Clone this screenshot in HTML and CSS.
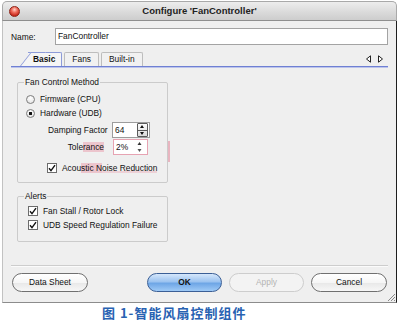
FILE: index.html
```html
<!DOCTYPE html>
<html>
<head>
    <title>Configure 'FanController'</title>
    <link rel="stylesheet" href="styles.css">
</head>
<body>
    <div class="window">
        <div class="titlebar">
            <span class="close"></span>
            <span class="title">Configure 'FanController'</span>
            <span></span>
        </div>
        <div class="body">
            <div class="name-row">
                <label>Name:</label>
                <div class="text-input">FanController</div>
            </div>

            <div class="tabs">
                <div class="tab active">Basic</div>
                <div class="tab">Fans</div>
                <div class="tab">Built-in</div>
                <svg class="tab-arrows" width="19" height="8" viewBox="0 0 19 8">
                    <path d="M1.5 4 L5.5 0.8 L5.5 7.2 Z" fill="#fff" stroke="#222" stroke-width="1"/>
                    <path d="M17.5 4 L13.5 0.8 L13.5 7.2 Z" fill="#fff" stroke="#222" stroke-width="1"/>
                </svg>
            </div>

            <div class="panel">
                <fieldset class="group method">
                    <legend>Fan Control Method</legend>
                    <div class="rows">
                        <div class="row">
                            <span class="radio"></span>
                            <span>Firmware (CPU)</span>
                        </div>
                        <div class="row">
                            <span class="radio checked"></span>
                            <span>Hardware (UDB)</span>
                        </div>
                        <div class="row field damping">
                            <span class="field-label">Damping Factor</span>
                            <div class="spin-input">
                                <span class="value">64</span>
                                <span class="spin">
                                    <span class="spin-up"></span>
                                    <span class="spin-down"></span>
                                </span>
                            </div>
                        </div>
                        <div class="row field tolerance">
                            <span class="field-label">Tole<span class="mark">rance</span></span>
                            <div class="spin-input small">
                                <span class="value">2%</span>
                                <svg class="mini-spin" width="5" height="12" viewBox="0 0 5 12">
                                    <path d="M0.5 4 L2.5 1 L4.5 4 Z" fill="#333"/>
                                    <path d="M0.5 8 L2.5 11 L4.5 8 Z" fill="#555"/>
                                </svg>
                            </div>
                        </div>
                        <div class="row check-row acoustic">
                            <span class="checkbox">
                                <svg width="8" height="8" viewBox="0 0 8 8"><path d="M1 4.2 L3 6.6 L7 1.2" fill="none" stroke="#111" stroke-width="1.4"/></svg>
                            </span>
                            <span>Acou<span class="mark">stic N</span><span class="mark-line">oise Reduction</span></span>
                        </div>
                    </div>
                </fieldset>

                <fieldset class="group alerts">
                    <legend>Alerts</legend>
                    <div class="rows">
                        <div class="row check-row">
                            <span class="checkbox">
                                <svg width="8" height="8" viewBox="0 0 8 8"><path d="M1 4.2 L3 6.6 L7 1.2" fill="none" stroke="#111" stroke-width="1.4"/></svg>
                            </span>
                            <span>Fan Stall / Rotor Lock</span>
                        </div>
                        <div class="row check-row">
                            <span class="checkbox">
                                <svg width="8" height="8" viewBox="0 0 8 8"><path d="M1 4.2 L3 6.6 L7 1.2" fill="none" stroke="#111" stroke-width="1.4"/></svg>
                            </span>
                            <span>UDB Speed Regulation Failure</span>
                        </div>
                    </div>
                </fieldset>
            </div>

            <div class="separator"></div>

            <div class="buttons">
                <div class="btn">Data Sheet</div>
                <div class="btn-group">
                    <div class="btn primary">OK</div>
                    <div class="btn disabled">Apply</div>
                    <div class="btn">Cancel</div>
                </div>
            </div>

            <span class="pink-streak"></span>
            <svg class="grip" width="8" height="8" viewBox="0 0 8 8">
                <path d="M1 8 L8 1 M4 8 L8 4 M7 8 L8 7" stroke="#8a8a8a" stroke-width="1"/>
            </svg>
        </div>
    </div>

    <div class="caption">图 1-智能风扇控制组件</div>
</body>
</html>
```

FILE: styles.css
```css
body {
    margin: 0;
    background: #fff;
    font-family: "Liberation Sans", Arial, sans-serif;
    font-size: 8.4px;
    line-height: 10px;
    color: #111;
}

.window {
    margin: 1px 0 0 2px;
    width: 395px;
}

.titlebar {
    height: 20px;
    box-sizing: border-box;
    display: grid;
    grid-template-columns: 1fr auto 1fr;
    align-items: center;
    background: linear-gradient(#ededed, #d9d9d9 60%, #cdcdcd);
    border: 1px solid #a9a9a9;
    border-bottom-color: #8e8e8e;
    border-radius: 5px 5px 0 0;
}
.close {
    width: 11px;
    height: 11px;
    margin-left: 6px;
    box-sizing: border-box;
    border-radius: 50%;
    border: 1px solid #8d2418;
    background: radial-gradient(circle at 50% 30%, #ffd2c8 0, #f07060 35%, #c8281c 75%, #a41a10 100%);
}
.title {
    font-weight: bold;
    font-size: 9.5px;
    color: #222;
}

.body {
    position: relative;
    height: 282px;
    box-sizing: border-box;
    padding: 7px 8px 0 8px;
    background: #efefef;
    border-left: 1px solid #c2c2c2;
    border-right: 1px solid #1e1e1e;
    border-bottom: 1px solid #8c8c8c;
}

.name-row {
    display: flex;
    align-items: center;
    height: 17px;
}
.name-row label {
    width: 44px;
}
.text-input {
    flex: 1;
    height: 17px;
    box-sizing: border-box;
    border: 1px solid #a3a3a3;
    background: #fff;
    padding-left: 2px;
    line-height: 15px;
}

.tabs {
    display: flex;
    align-items: flex-end;
    height: 15px;
    margin-top: 7px;
    box-sizing: border-box;
    border-bottom: 1px solid #6f80d3;
    box-shadow: 0 1px 0 #bcc4ec;
}
.tab {
    position: relative;
    z-index: 0;
    height: 14px;
    box-sizing: border-box;
    padding: 0 7px;
    margin-left: 2px;
    line-height: 13px;
    border: 1px solid #bdbdbd;
    border-bottom: none;
    border-radius: 2px 2px 0 0;
    background: #f1f1f1;
}
.tab.active {
    margin-left: 17px;
    padding: 0 6px 0 5px;
    font-weight: bold;
    border-color: #8d9bd8;
    border-left: none;
    border-radius: 0 2px 0 0;
    background: #f5f5f5;
}
.tab.active::before {
    content: "";
    position: absolute;
    z-index: -1;
    top: -1px;
    bottom: 0;
    left: -8px;
    width: 14px;
    border-left: 1px solid #8d9bd8;
    border-top: 1px solid #8d9bd8;
    background: #f5f5f5;
    transform: skewX(-38deg);
    transform-origin: bottom left;
}
.tab-arrows {
    margin-left: auto;
    margin-right: 4px;
    align-self: center;
}

.panel {
    padding-left: 6px;
}
.group {
    width: 151px;
    min-width: 0;
    box-sizing: border-box;
    margin: 10px 0 0 0;
    padding: 0;
    border: 1px solid #cbcbcb;
    border-radius: 2px;
}
.group legend {
    margin-left: 6px;
    padding: 0 1px;
    line-height: 10px;
}
.method .rows {
    padding: 5px 0 7px 8px;
}
.alerts {
    margin-top: 8px;
}
.alerts .rows {
    padding: 3px 0 9px 10px;
}

.row {
    display: flex;
    align-items: center;
    height: 14px;
    gap: 5px;
}
.radio {
    width: 9px;
    height: 9px;
    box-sizing: border-box;
    border-radius: 50%;
    border: 1px solid #7d7d7d;
    background: radial-gradient(circle at 50% 30%, #fff, #dedede);
}
.radio.checked {
    background: radial-gradient(circle, #111 0 1.4px, transparent 1.9px), radial-gradient(circle at 50% 30%, #fff, #dedede);
}

.field {
    height: 16px;
    margin-left: 22px;
    gap: 0;
}
.damping {
    margin-top: 2px;
}
.tolerance {
    margin-top: 1px;
}
.field-label {
    width: 64px;
}
.tolerance .field-label {
    width: 65px;
    box-sizing: border-box;
    padding-right: 9px;
    text-align: right;
}
.spin-input {
    display: flex;
    align-items: center;
    width: 38px;
    height: 16px;
    box-sizing: border-box;
    border: 1px solid #9c9c9c;
    background: #fff;
}
.spin-input .value {
    flex: 1;
    padding-left: 2px;
}
.spin {
    display: flex;
    flex-direction: column;
    width: 11px;
    height: 14px;
    box-sizing: border-box;
    margin-right: 1px;
    border: 1px solid #5a5a5a;
    border-radius: 1px;
    background: linear-gradient(#fbfbfb, #dcdcdc);
}
.spin-up,
.spin-down {
    flex: 1;
    position: relative;
}
.spin-up {
    border-bottom: 1px solid #5a5a5a;
}
.spin-up::after,
.spin-down::after {
    content: "";
    position: absolute;
    left: 2px;
    border-left: 2.5px solid transparent;
    border-right: 2.5px solid transparent;
}
.spin-up::after {
    top: 1px;
    border-bottom: 3px solid #111;
}
.spin-down::after {
    top: 1px;
    border-top: 3px solid #111;
}
.spin-input.small {
    width: 35px;
    border-color: #e6a3b2;
}
.mini-spin {
    margin-right: 5px;
}

.check-row {
    gap: 5px;
}
.acoustic {
    margin-top: 6px;
    margin-left: 21px;
}
.checkbox {
    display: flex;
    align-items: center;
    justify-content: center;
    width: 10px;
    height: 10px;
    box-sizing: border-box;
    border: 1px solid #6c6c6c;
    background: #fff;
}

.mark {
    background: rgba(232, 120, 142, 0.35);
}
.mark-line {
    box-shadow: inset 0 -2px 0 rgba(232, 120, 142, 0.25);
}
.pink-streak {
    position: absolute;
    left: 165px;
    top: 120px;
    width: 2px;
    height: 21px;
    background: rgba(225, 110, 135, 0.45);
}

.separator {
    height: 1px;
    margin-top: 23px;
    background: #cdcdcd;
    box-shadow: 0 1px 0 #fbfbfb;
}

.buttons {
    display: flex;
    margin-top: 7px;
    padding: 0 1px;
}
.btn-group {
    display: flex;
    gap: 7px;
    margin-left: auto;
}
.btn {
    width: 76px;
    height: 19px;
    box-sizing: border-box;
    border: 1px solid #707070;
    border-radius: 10px;
    background: linear-gradient(#ffffff, #f6f6f6 50%, #e9e9e9 55%, #f7f7f7);
    text-align: center;
    line-height: 17px;
}
.btn.primary {
    width: 75px;
    font-weight: bold;
    border-color: #3b5f96;
    background: linear-gradient(#d5e7fb, #9cc3f0 45%, #6ea6e6 55%, #9fcaf6);
}
.btn.disabled {
    width: 75px;
    color: #b3b3b3;
    border-color: #cdcdcd;
    background: #f3f3f3;
}

.grip {
    position: absolute;
    right: 1px;
    bottom: 1px;
}

.caption {
    margin-top: 2px;
    padding-left: 102px;
    font-family: "Noto Sans CJK SC", sans-serif;
    font-size: 13px;
    line-height: 15px;
    font-weight: bold;
    letter-spacing: 1px;
    color: #2862b2;
}
```
